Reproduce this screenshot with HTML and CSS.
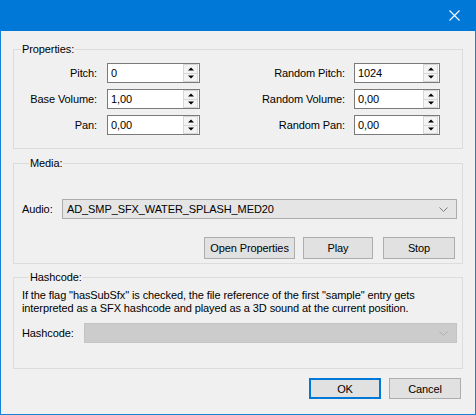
FILE: index.html
```html
<!DOCTYPE html>
<html>
<head>
<meta charset="utf-8">
<link rel="stylesheet" href="styles.css">
</head>
<body>
<div class="window">
  <div class="titlebar">
    <div class="close">
      <svg width="11" height="11" viewBox="0 0 11 11"><path d="M0.5 0.5 L10.5 10.5 M10.5 0.5 L0.5 10.5" stroke="#fff" stroke-width="1.1" fill="none"/></svg>
    </div>
  </div>
  <div class="client">
    <fieldset class="group props">
      <legend>Properties:</legend>
      <div class="props-grid">
        <span class="lbl lbl-l">Pitch:</span>
        <div class="spin"><span class="val">0</span><span class="arrows"><span class="up"></span><span class="down"></span></span></div>
        <span class="lbl lbl-r">Random Pitch:</span>
        <div class="spin"><span class="val">1024</span><span class="arrows"><span class="up"></span><span class="down"></span></span></div>

        <span class="lbl lbl-l">Base Volume:</span>
        <div class="spin"><span class="val">1,00</span><span class="arrows"><span class="up"></span><span class="down"></span></span></div>
        <span class="lbl lbl-r">Random Volume:</span>
        <div class="spin"><span class="val">0,00</span><span class="arrows"><span class="up"></span><span class="down"></span></span></div>

        <span class="lbl lbl-l">Pan:</span>
        <div class="spin"><span class="val">0,00</span><span class="arrows"><span class="up"></span><span class="down"></span></span></div>
        <span class="lbl lbl-r">Random Pan:</span>
        <div class="spin"><span class="val">0,00</span><span class="arrows"><span class="up"></span><span class="down"></span></span></div>
      </div>
    </fieldset>

    <fieldset class="group media">
      <legend>Media:</legend>
      <div class="row audio-row">
        <span class="row-lbl audio-lbl">Audio:</span>
        <div class="combo"><span class="val">AD_SMP_SFX_WATER_SPLASH_MED20</span>
          <svg class="chev" width="9" height="5" viewBox="0 0 9 5"><path d="M0.5 0.5 L4.5 4.5 L8.5 0.5" stroke="#7a7a7a" stroke-width="1" fill="none"/></svg>
        </div>
      </div>
      <div class="btn-row">
        <div class="btn btn-open">Open Properties</div>
        <div class="btn btn-play">Play</div>
        <div class="btn btn-stop">Stop</div>
      </div>
    </fieldset>

    <fieldset class="group hash">
      <legend>Hashcode:</legend>
      <p class="desc">If the flag "hasSubSfx" is checked, the file reference of the first "sample" entry gets<br>interpreted as a SFX hashcode and played as a 3D sound at the current position.</p>
      <div class="row hash-row">
        <span class="row-lbl hash-lbl">Hashcode:</span>
        <div class="combo disabled">
          <svg class="chev" width="9" height="5" viewBox="0 0 9 5"><path d="M0.5 0.5 L4.5 4.5 L8.5 0.5" stroke="#b0b0b0" stroke-width="1" fill="none"/></svg>
        </div>
      </div>
    </fieldset>

    <div class="dialog-buttons">
      <div class="btn btn-ok">OK</div>
      <div class="btn btn-cancel">Cancel</div>
    </div>
  </div>
</div>
</body>
</html>
```

FILE: styles.css
```css
html, body {
  margin: 0;
  padding: 0;
  background: #f0f0f0;
  overflow: hidden;
}

body {
  font-family: "Liberation Sans", Arial, sans-serif;
  font-size: 11px;
  letter-spacing: -0.1px;
  color: #000;
}

.window {
  width: 476px;
  height: 415px;
  box-sizing: border-box;
  border-left: 1px solid #1783d8;
  border-right: 1px solid #1783d8;
  border-bottom: 1px solid #1783d8;
  background: #f0f0f0;
  display: flex;
  flex-direction: column;
}

.titlebar {
  height: 31px;
  flex: none;
  background: #0078d7;
  margin: 0 -1px;
  display: flex;
  justify-content: flex-end;
  align-items: center;
}

.close {
  width: 46px;
  height: 31px;
  display: flex;
  align-items: center;
  justify-content: center;
}

.close svg {
  display: block;
  margin-left: 2px;
}

.client {
  padding: 12px 12px 0 12px;
  display: flex;
  flex-direction: column;
}

.group {
  margin: 0;
  border: 1px solid #dcdcdc;
  min-inline-size: 0;
}

.group legend {
  padding: 0 1px;
  margin-left: 7px;
  line-height: 13px;
  height: 13px;
}

.props {
  padding: 7px 0 13px 0;
}

.props-grid {
  display: grid;
  grid-template-columns: 93px 93px 154px 86px;
  grid-auto-rows: 20px;
  row-gap: 6px;
}

.lbl {
  display: flex;
  align-items: center;
  justify-content: flex-end;
  white-space: nowrap;
}

.lbl-l { padding-right: 10px; }
.lbl-r { padding-right: 9px; }

.spin {
  box-sizing: border-box;
  height: 20px;
  background: #fff;
  border: 1px solid #7a7a7a;
  display: flex;
  align-items: stretch;
}

.spin .val {
  flex: 1;
  padding-left: 3px;
  line-height: 18px;
}

.arrows {
  width: 15px;
  display: flex;
  flex-direction: column;
  margin: 0 1px 0 0;
}

.arrows .up,
.arrows .down {
  flex: 1;
  position: relative;
  box-sizing: border-box;
  border: 1px solid #d6d6d6;
  background: #f4f4f4;
}

.arrows .down {
  border-top: none;
}

.arrows .up::after,
.arrows .down::after {
  content: "";
  position: absolute;
  left: 50%;
  top: 50%;
  width: 0;
  height: 0;
  border-left: 3px solid transparent;
  border-right: 3px solid transparent;
  transform: translate(-50%, -50%);
}

.arrows .up::after {
  border-bottom: 3px solid #000;
}

.arrows .down::after {
  border-top: 3px solid #000;
}

.media {
  margin-top: 8px;
  padding: 29px 5px 4px 8px;
}

.row {
  display: flex;
  align-items: center;
}

.row-lbl {
  flex: none;
}

.audio-lbl { width: 40px; }
.hash-lbl { width: 62px; }

.combo {
  flex: 1;
  box-sizing: border-box;
  height: 20px;
  background: #e5e5e5;
  border: 1px solid #acacac;
  display: flex;
  align-items: center;
  padding: 0 8px 0 4px;
}

.combo .val {
  flex: 1;
  white-space: nowrap;
}

.combo .chev {
  margin-left: auto;
  display: block;
}

.combo.disabled {
  background: #cccccc;
  border-color: #c4c4c4;
}

.btn-row {
  display: flex;
  justify-content: flex-end;
  margin-top: 18px;
  padding-right: 2px;
}

.btn {
  box-sizing: border-box;
  height: 22px;
  background: #e1e1e1;
  border: 1px solid #adadad;
  display: flex;
  align-items: center;
  justify-content: center;
  white-space: nowrap;
}

.btn-open { width: 91px; }
.btn-play { width: 70px; margin-left: 8px; }
.btn-stop { width: 72px; margin-left: 10px; }

.hash {
  margin-top: 7px;
  padding: 5px 5px 25px 8px;
}

.desc {
  margin: 0;
  line-height: 13px;
  white-space: nowrap;
}

.hash-row {
  margin-top: 8px;
}

.dialog-buttons {
  display: flex;
  justify-content: flex-end;
  margin-top: 9px;
  padding-right: 2px;
  gap: 8px;
}

.btn-ok,
.btn-cancel {
  width: 72px;
  height: 21px;
}

.btn-ok {
  border: 1px solid #0078d7;
  box-shadow: inset 0 0 0 1px #0078d7;
}
```
